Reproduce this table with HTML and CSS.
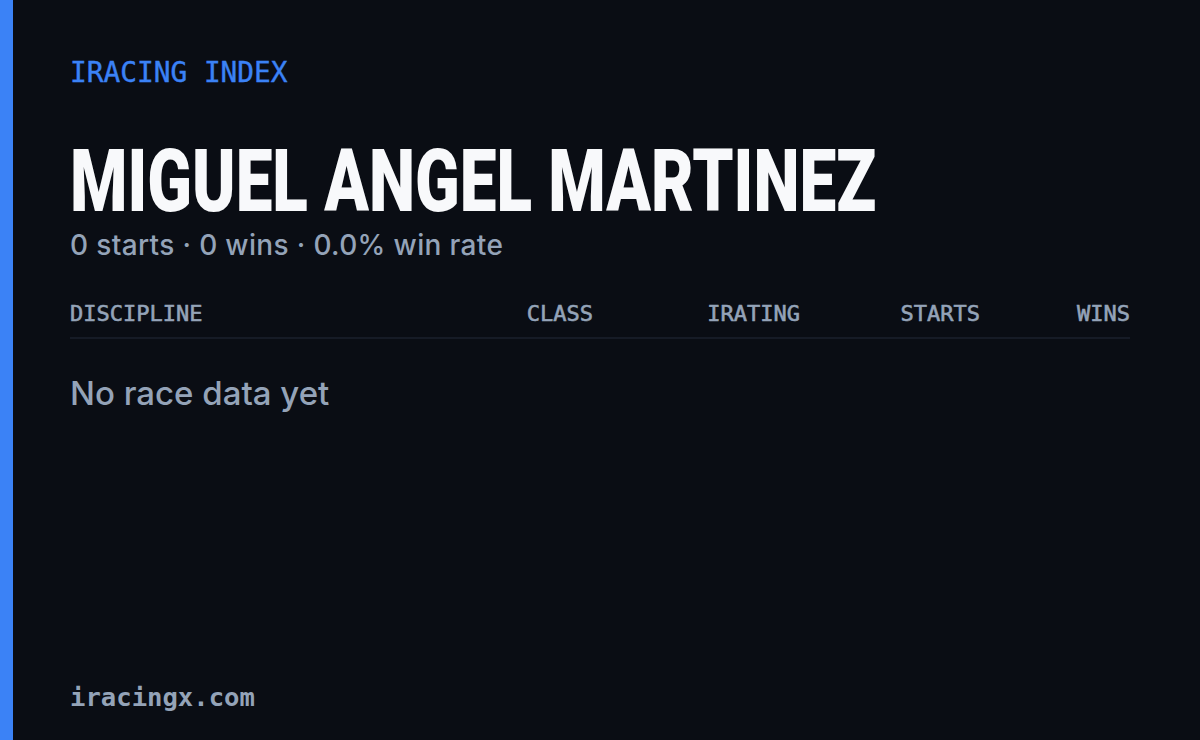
FILE: index.html
```html
<!DOCTYPE html>
<html lang="en">
<head>
  <meta charset="UTF-8" />
  <meta name="viewport" content="width=device-width, initial-scale=1.0" />
  <title>iRacing Index - Miguel Angel Martinez</title>
  <link rel="stylesheet" href="styles.css">
</head>
<body>

  <div class="card">
    <div class="accent"></div>

    <main class="content">
      <div class="label">IRACING INDEX</div>

      <h1 class="name"><span>MIGUEL ANGEL MARTINEZ</span></h1>
      <p class="summary">0 starts · 0 wins · 0.0% win rate</p>

      <!-- Stats table -->
      <div class="stats-head">
        <div>DISCIPLINE</div>
        <div class="num">CLASS</div>
        <div class="num">IRATING</div>
        <div class="num">STARTS</div>
        <div class="num">WINS</div>
      </div>
      <p class="empty">No race data yet</p>

      <div class="footer">iracingx.com</div>
    </main>
  </div>

</body>
</html>
```

FILE: styles.css
```css
body {
  margin: 0;
  background-color: #0a0d14;
  font-family: "Inter", "Open Sans", sans-serif;
}

.card {
  display: flex;
  width: 1200px;
  height: 740px;
  overflow: hidden;
  background-color: #0a0d14;
}

.accent {
  width: 13px;
  flex-shrink: 0;
  background-color: #3b82f6;
}

.content {
  flex: 1;
  min-width: 0;
  display: flex;
  flex-direction: column;
  padding: 59px 70px 29px 57px;
}

.label {
  font-family: "DejaVu Sans Mono", monospace;
  font-size: 27.8px;
  line-height: 1;
  color: #3b82f6;
  -webkit-text-stroke: 0.4px #3b82f6;
}

.name {
  height: 70px;
  margin: 60.7px 0 0;
  font-family: "Roboto", sans-serif;
  font-weight: 900;
  font-size: 87px;
  line-height: 0.8;
  color: #f8f9fb;
  white-space: nowrap;
}

.name span {
  display: inline-block;
  transform: scaleX(0.754);
  transform-origin: left center;
}

.summary {
  margin: 13.3px 0 0;
  font-size: 28px;
  font-weight: 500;
  letter-spacing: 0.35px;
  line-height: 1;
  color: #94a3b8;
}

.stats-head {
  display: grid;
  grid-template-columns: 1fr 180px 207px 180px 150px;
  margin-top: 44px;
  padding-bottom: 12px;
  border-bottom: 2px solid #161b26;
  font-family: "DejaVu Sans Mono", monospace;
  font-size: 22px;
  line-height: 1;
  color: #94a3b8;
  -webkit-text-stroke: 0.6px #94a3b8;
}

.stats-head .num {
  text-align: right;
}

.empty {
  margin: 38px 0 0;
  font-size: 33px;
  font-weight: 500;
  line-height: 1;
  color: #94a3b8;
}

.footer {
  margin-top: auto;
  font-family: "DejaVu Sans Mono", monospace;
  font-weight: 700;
  font-size: 25.6px;
  line-height: 1;
  color: #94a3b8;
}
```
